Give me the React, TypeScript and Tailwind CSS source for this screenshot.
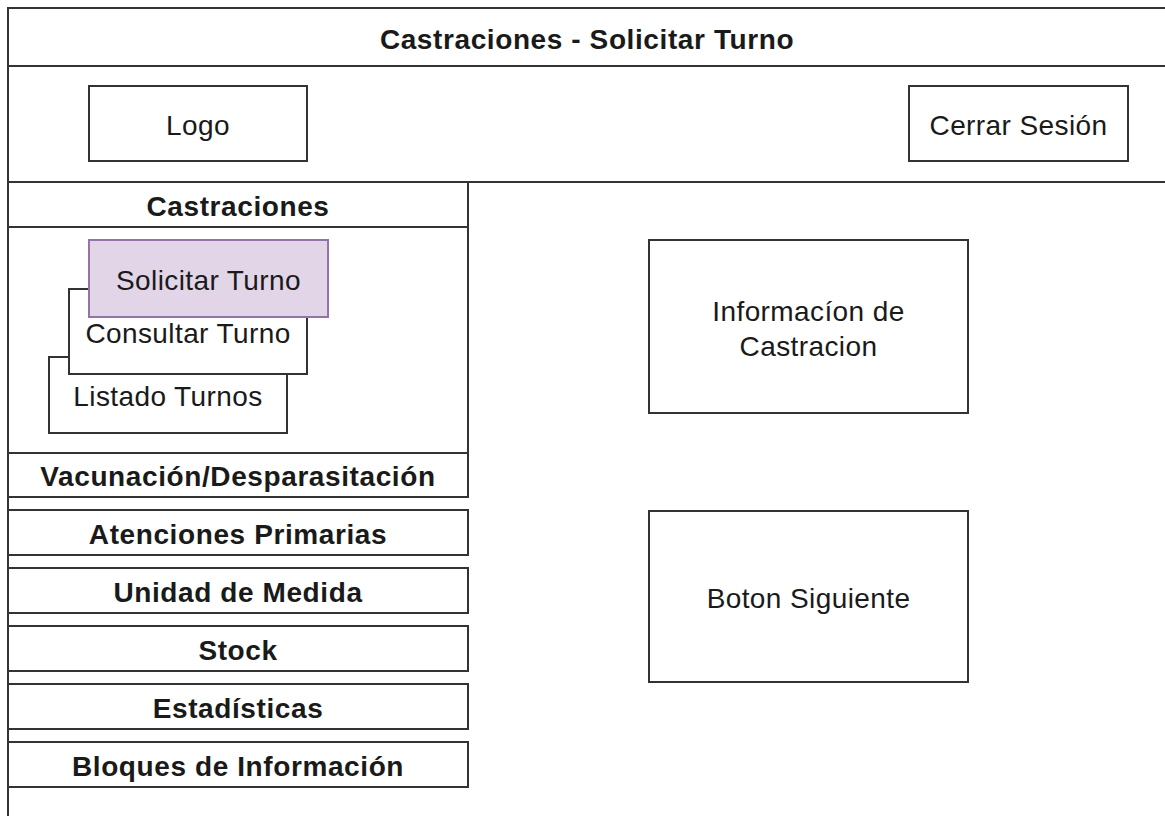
const menu = [
  "Atenciones Primarias",
  "Unidad de Medida",
  "Stock",
  "Estadísticas",
  "Bloques de Información",
]

const font = { fontFamily: '"Liberation Sans", Arial, sans-serif' }

export default function App() {
  return (
    <div
      className="w-[1165px] h-[816px] overflow-hidden bg-white pl-[7px] pt-[7px] text-[#1a1a1a]"
      style={font}
    >
      <div className="flex h-[820px] w-[1158px] flex-col border-l-2 border-t-2 border-[#333]">
        {/* titulo */}
        <div className="flex h-[58px] shrink-0 items-center justify-center border-b-2 border-[#333] pt-[6px] text-[28px] font-bold tracking-[0.6px]">
          Castraciones - Solicitar Turno
        </div>

        {/* cabecera */}
        <div className="flex h-[116px] shrink-0 justify-between border-b-2 border-[#333] pl-[79px] pr-[36px] pt-[18px] text-[28px] tracking-[0.4px]">
          <div className="flex h-[77px] w-[220px] items-center justify-center border-2 border-[#333] pt-[4px]">
            Logo
          </div>
          <div className="flex h-[77px] w-[221px] items-center justify-center border-2 border-[#333] pt-[4px]">
            Cerrar Sesión
          </div>
        </div>

        <div className="flex flex-1">
          {/* menu lateral */}
          <div className="flex w-[460px] shrink-0 flex-col text-[28px] font-bold tracking-[0.6px]">
            <div className="flex h-[45px] items-center justify-center border-b-2 border-r-2 border-[#333] pt-[4px]">
              Castraciones
            </div>
            <div className="relative h-[226px] border-b-2 border-r-2 border-[#333] font-normal tracking-[0.4px]">
              <div className="absolute left-[39px] top-[128px] flex h-[78px] w-[240px] items-center justify-center border-2 border-[#333] bg-white pt-[4px]">
                Listado Turnos
              </div>
              <div className="absolute left-[59px] top-[60px] flex h-[87px] w-[240px] items-center justify-center border-2 border-[#333] bg-white pt-[4px]">
                Consultar Turno
              </div>
              <div className="absolute left-[79px] top-[11px] flex h-[79px] w-[241px] items-center justify-center border-2 border-[#9673a6] bg-[#e1d5e7] pt-[4px]">
                Solicitar Turno
              </div>
            </div>
            <div className="flex h-[44px] items-center justify-center border-b-2 border-r-2 border-[#333] pt-[4px]">
              Vacunación/Desparasitación
            </div>
            {menu.map((item) => (
              <div
                key={item}
                className="mt-[11px] flex h-[47px] items-center justify-center border-y-2 border-r-2 border-[#333] pt-[4px]"
              >
                {item}
              </div>
            ))}
          </div>

          {/* contenido */}
          <div className="flex flex-1 flex-col pl-[179px] pt-[56px] text-[28px] tracking-[0.4px]">
            <div className="flex h-[175px] w-[321px] items-center justify-center border-2 border-[#333] pt-[4px] text-center leading-[35px]">
              Informacíon de
              <br />
              Castracion
            </div>
            <div className="mt-[96px] flex h-[173px] w-[321px] items-center justify-center border-2 border-[#333] pt-[4px]">
              Boton Siguiente
            </div>
          </div>
        </div>
      </div>
    </div>
  )
}
